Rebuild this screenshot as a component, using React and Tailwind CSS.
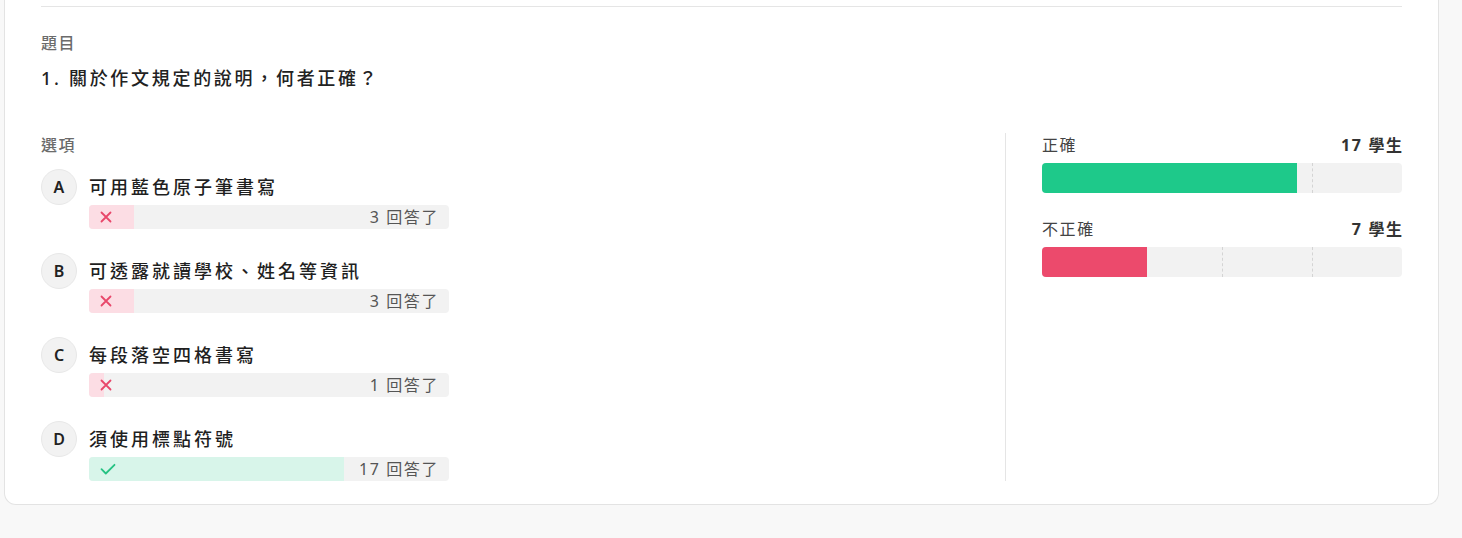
const total = 24;

const options = [
  { key: "A", text: "可用藍色原子筆書寫", count: 3, correct: false },
  { key: "B", text: "可透露就讀學校、姓名等資訊", count: 3, correct: false },
  { key: "C", text: "每段落空四格書寫", count: 1, correct: false },
  { key: "D", text: "須使用標點符號", count: 17, correct: true },
];

const summary = [
  { label: "正確", count: 17, color: "bg-[#1ec98a]" },
  { label: "不正確", count: 7, color: "bg-[#ec4a6c]" },
];

function XIcon() {
  return (
    <svg width="12" height="12" viewBox="0 0 12 12" fill="none">
      <path d="M1.5 1.5l9 9M10.5 1.5l-9 9" stroke="#e8476a" strokeWidth="1.8" strokeLinecap="round" />
    </svg>
  );
}

function CheckIcon() {
  return (
    <svg width="16" height="12" viewBox="0 0 16 12" fill="none">
      <path d="M1.5 6.2l4.3 4.3L14.5 1.8" stroke="#25c283" strokeWidth="1.8" strokeLinecap="round" strokeLinejoin="round" />
    </svg>
  );
}

function OptionRow({ option }) {
  const width = (option.count / total) * 100;
  return (
    <div className="flex gap-[12px]">
      <div className="flex h-[36px] w-[36px] shrink-0 items-center justify-center rounded-full border border-[#e8e8e8] bg-[#f2f2f2] text-[16px] font-semibold tracking-normal text-[#222]">
        {option.key}
      </div>
      <div className="flex-1">
        <div className="h-[36px] text-[18px] font-medium leading-[36px] tracking-[3px] text-[#1f1f1f]">
          {option.text}
        </div>
        <div className="relative h-[24px] w-[360px] overflow-hidden rounded-[4px] bg-[#f2f2f2]">
          <div
            className={`absolute inset-y-0 left-0 ${option.correct ? "bg-[#d8f5ea]" : "bg-[#fcdde4]"}`}
            style={{ width: `${width}%` }}
          />
          <div className="relative flex h-full items-center justify-between pl-[11px] pr-[10px]">
            <span className="flex items-center">{option.correct ? <CheckIcon /> : <XIcon />}</span>
            <span className="text-[16px] text-[#555]">{option.count} 回答了</span>
          </div>
        </div>
      </div>
    </div>
  );
}

function SummaryBar({ item }) {
  return (
    <div>
      <div className="flex items-center justify-between text-[16px] leading-[24px]">
        <span className="text-[#444]">{item.label}</span>
        <span className="-mr-[1.6px] font-bold text-[#333]">{item.count} 學生</span>
      </div>
      <div className="relative mt-[6px] h-[30px] w-[360px] overflow-hidden rounded-[4px] bg-[#f2f2f2]">
        <div className="absolute left-[90px] inset-y-0 border-l border-dashed border-[#d4d4d4]" />
        <div className="absolute left-[180px] inset-y-0 border-l border-dashed border-[#d4d4d4]" />
        <div className="absolute left-[270px] inset-y-0 border-l border-dashed border-[#d4d4d4]" />
        <div
          className={`absolute inset-y-0 left-0 ${item.color}`}
          style={{ width: `${(item.count / total) * 100}%` }}
        />
      </div>
    </div>
  );
}

export default function App() {
  return (
    <div
      lang="zh-TW"
      className="min-h-[538px] bg-[#f8f8f8] tracking-widest"
      style={{ fontFamily: "'Noto Sans', 'Noto Sans CJK TC', sans-serif" }}
    >
      <div className="ml-[4px] w-[1435px] rounded-b-[12px] border border-t-0 border-[#e3e3e3] bg-white px-[36px] pt-[6px] pb-[23px]">
        <div className="h-px bg-[#e5e5e5]" />

        <div className="mt-[26px] text-[16px] font-medium leading-[20px] text-[#6b6b6b]">題目</div>
        <div className="mt-[11px] text-[18px] font-medium leading-[28px] tracking-[2.7px] text-[#222]">
          1. 關於作文規定的說明，何者正確？
        </div>

        <div className="mt-[41px] flex">
          <div className="flex-1">
            <div className="text-[16px] font-medium leading-[24px] text-[#6b6b6b]">選項</div>
            <div className="mt-[12px] flex flex-col gap-[24px]">
              {options.map((option) => (
                <OptionRow key={option.key} option={option} />
              ))}
            </div>
          </div>

          <div className="w-[397px] border-l border-[#e5e5e5] pl-[36px]">
            <div className="flex flex-col gap-[24px]">
              {summary.map((item) => (
                <SummaryBar key={item.label} item={item} />
              ))}
            </div>
          </div>
        </div>
      </div>
    </div>
  );
}
